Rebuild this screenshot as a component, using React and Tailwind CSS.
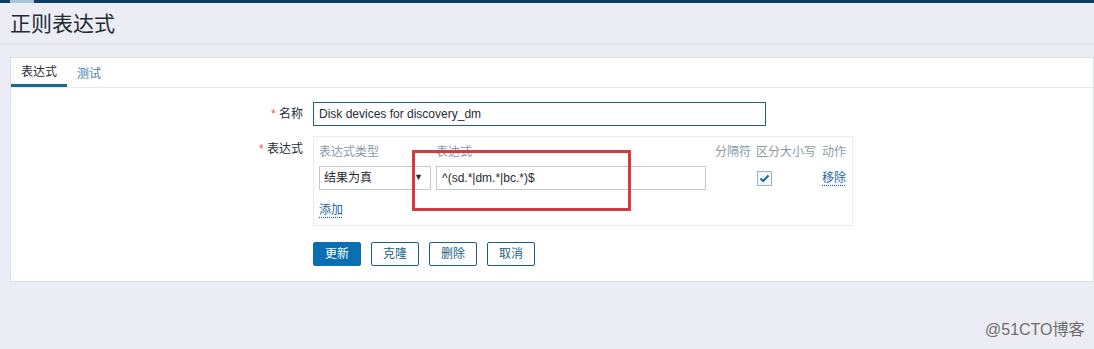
import React from "react";

const font = { fontFamily: '"Liberation Sans", Arial, "Noto Sans CJK SC", sans-serif' };

function Btn({ children, primary }) {
  return primary ? (
    <button className="h-[24px] w-[48px] rounded-[2px] bg-[#0b6eb1] text-[12px] text-white border border-[#0b6eb1]">{children}</button>
  ) : (
    <button className="h-[24px] w-[48px] rounded-[2px] bg-white text-[12px] text-[#1b5f86] border border-[#1b5f86]">{children}</button>
  );
}

export default function App() {
  return (
    <div style={font} className="relative min-h-[349px] w-[1094px] overflow-hidden bg-[#ececf4] text-[12px] text-[#1f2c33]">
      {/* top bar */}
      <div className="flex h-[3px] bg-[#0b3f64]">
        <div className="ml-[10px] w-[24px] bg-[#aac4d8]" />
      </div>
      {/* header */}
      <div className="mx-[0px] flex h-[42px] items-center border-b-2 border-[#e2e2ea] pl-[10px]">
        <h1 className="text-[21px] font-normal leading-none text-[#1f2c33]">正则表达式</h1>
      </div>
      {/* panel */}
      <div className="ml-[10px] mt-[12px] border border-[#dcdfe4] bg-white">
        <div className="flex h-[30px] items-stretch border-b border-[#e6e9ed]">
          <div className="flex w-[56px] items-center justify-center border-b-[3px] border-[#176b96] pt-[2px] text-[12px] text-[#1f2c33]">表达式</div>
          <div className="flex items-center pl-[10px] pt-[2px] text-[12px] text-[#3d7fb3]">测试</div>
        </div>
        <div className="pb-[15px] pt-[14px]">
          {/* row name */}
          <div className="flex items-center">
            <div className="w-[292px] pr-[0px] text-right text-[12px]">
              <span className="text-[#e45959]">*</span> 名称
            </div>
            <div className="ml-[10px] flex h-[24px] w-[453px] items-center border border-[#1f5f80] bg-white px-[5px] text-[12px] text-[#1f2c33]">
              Disk devices for discovery_dm
            </div>
          </div>
          {/* row expression */}
          <div className="mt-[10px] flex items-start">
            <div className="w-[292px] pt-[4px] text-right text-[12px]">
              <span className="text-[#e45959]">*</span> 表达式
            </div>
            <div className="ml-[10px] h-[90px] w-[540px] border border-[#ebebeb] px-[5px] pt-[6px]">
              <div className="grid grid-cols-[117px_279px_41px_66px_30px] text-[12px] leading-[18px] text-[#8a9aa5]">
                <div>表达式类型</div>
                <div>表达式</div>
                <div>分隔符</div>
                <div>区分大小写</div>
                <div>动作</div>
              </div>
              <div className="mt-[5px] grid grid-cols-[117px_279px_41px_66px_30px] items-center">
                <div className="flex h-[24px] w-[112px] items-center border border-[#c4c9cc] bg-white">
                  <span className="flex-1 pl-[4px] text-[12px] text-[#1f2c33]">结果为真</span>
                  <span className="w-[16px] text-[9px] text-[#1f2c33]">▼</span>
                </div>
                <div className="flex h-[24px] w-[270px] items-center border border-[#c4c9cc] bg-white px-[5px] text-[12px] text-[#1f2c33]">
                  ^(sd.*|dm.*|bc.*)$
                </div>
                <div />
                <div className="pl-[1px]">
                  <div className="flex h-[15px] w-[15px] items-center justify-center border border-[#9fb0bb] bg-[#f4f8fb]">
                    <svg width="11" height="9" viewBox="0 0 11 9">
                      <path d="M1.5 4.5 L4.2 7 L9.5 1.5" fill="none" stroke="#1b6a93" strokeWidth="2" />
                    </svg>
                  </div>
                </div>
                <div className="text-[12px] text-[#1b66a2] underline decoration-dotted underline-offset-[3px]">移除</div>
              </div>
              <div className="mt-[11px] text-[12px] text-[#1b66a2] underline decoration-dotted underline-offset-[3px]">添加</div>
            </div>
          </div>
          {/* buttons */}
          <div className="ml-[302px] mt-[16px] flex gap-[10px]">
            <Btn primary>更新</Btn>
            <Btn>克隆</Btn>
            <Btn>删除</Btn>
            <Btn>取消</Btn>
          </div>
        </div>
      </div>
      {/* red annotation */}
      <div className="absolute left-[412px] top-[150px] h-[61px] w-[219px] border-[3px] border-[#d63a40]" />
      {/* watermark */}
      <div className="absolute left-[985px] top-[320px] text-[16px] leading-[20px] text-[#6d6d6d]" style={{ fontFamily: '"Liberation Sans", "Noto Sans CJK SC", sans-serif' }}>
        @51CTO博客
      </div>
    </div>
  );
}
